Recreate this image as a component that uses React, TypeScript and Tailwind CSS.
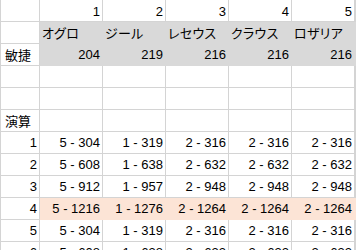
type Cell = string;

const names: Cell[] = ['オグロ', 'ジール', 'レセウス', 'クラウス', 'ロザリア'];

const results: { n: string; vals: Cell[]; hi?: boolean }[] = [
  { n: '1', vals: ['5 - 304', '1 - 319', '2 - 316', '2 - 316', '2 - 316'] },
  { n: '2', vals: ['5 - 608', '1 - 638', '2 - 632', '2 - 632', '2 - 632'] },
  { n: '3', vals: ['5 - 912', '1 - 957', '2 - 948', '2 - 948', '2 - 948'] },
  { n: '4', vals: ['5 - 1216', '1 - 1276', '2 - 1264', '2 - 1264', '2 - 1264'], hi: true },
  { n: '5', vals: ['5 - 304', '1 - 319', '2 - 316', '2 - 316', '2 - 316'] },
  { n: '6', vals: ['5 - 608', '1 - 638', '2 - 632', '2 - 632', '2 - 632'] },
];

const num = "font-['Liberation_Sans',Arial,sans-serif] text-[13px]";
const jp = "font-['Noto_Sans_CJK_JP',sans-serif] text-[13px]";
const base = 'h-[22px] flex items-center border-r border-b overflow-hidden whitespace-nowrap text-black';
const line = 'border-[#d4d4d4]';

function Row({ first, cells, last, tone, jpCells, pad }: {
  first: Cell;
  cells: Cell[];
  last?: boolean;
  tone?: 'gray' | 'peach';
  jpCells?: boolean;
  pad?: string;
}) {
  const fill =
    tone === 'gray'
      ? 'bg-[#d9d9d9] border-[#d9d9d9]'
      : tone === 'peach'
      ? 'bg-[#fce4d6] border-[#fce4d6]'
      : line;
  const firstIsNum = /^\d+$/.test(first);
  return (
    <>
      <div
        className={`${base} ${line} border-l ${pad ?? ''} ${
          firstIsNum ? `${num} justify-end pr-[2px]` : `${jp} pl-[4px]`
        }`}
      >
        {first}
      </div>
      {cells.map((c, i) => (
        <div
          key={i}
          className={`${base} ${fill} ${pad ?? ''} ${
            jpCells ? `${jp} pl-[2px] [font-feature-settings:'palt'] tracking-[0.3px]` : `${num} justify-end pr-[2px]`
          }`}
        >
          {c}
        </div>
      ))}
      <div className={`${base} ${fill} ${last ? '' : ''}`} />
    </>
  );
}

export default function App() {
  return (
    <div className="w-[356px] h-[250px] overflow-hidden bg-white">
      <div className="grid grid-cols-[40px_63px_63px_63px_63px_63px_1fr]">
        <Row first="" cells={['1', '2', '3', '4', '5']} pad="pt-[3px]" />
        <Row first="" cells={names} tone="gray" jpCells />
        <Row first="敏捷" cells={['204', '219', '216', '216', '216']} tone="gray" />
        <Row first="" cells={['', '', '', '', '']} />
        <Row first="" cells={['', '', '', '', '']} />
        <Row first="演算" cells={['', '', '', '', '']} />
        {results.map((r) => (
          <Row key={r.n} first={r.n} cells={r.vals} tone={r.hi ? 'peach' : undefined} />
        ))}
      </div>
    </div>
  );
}
